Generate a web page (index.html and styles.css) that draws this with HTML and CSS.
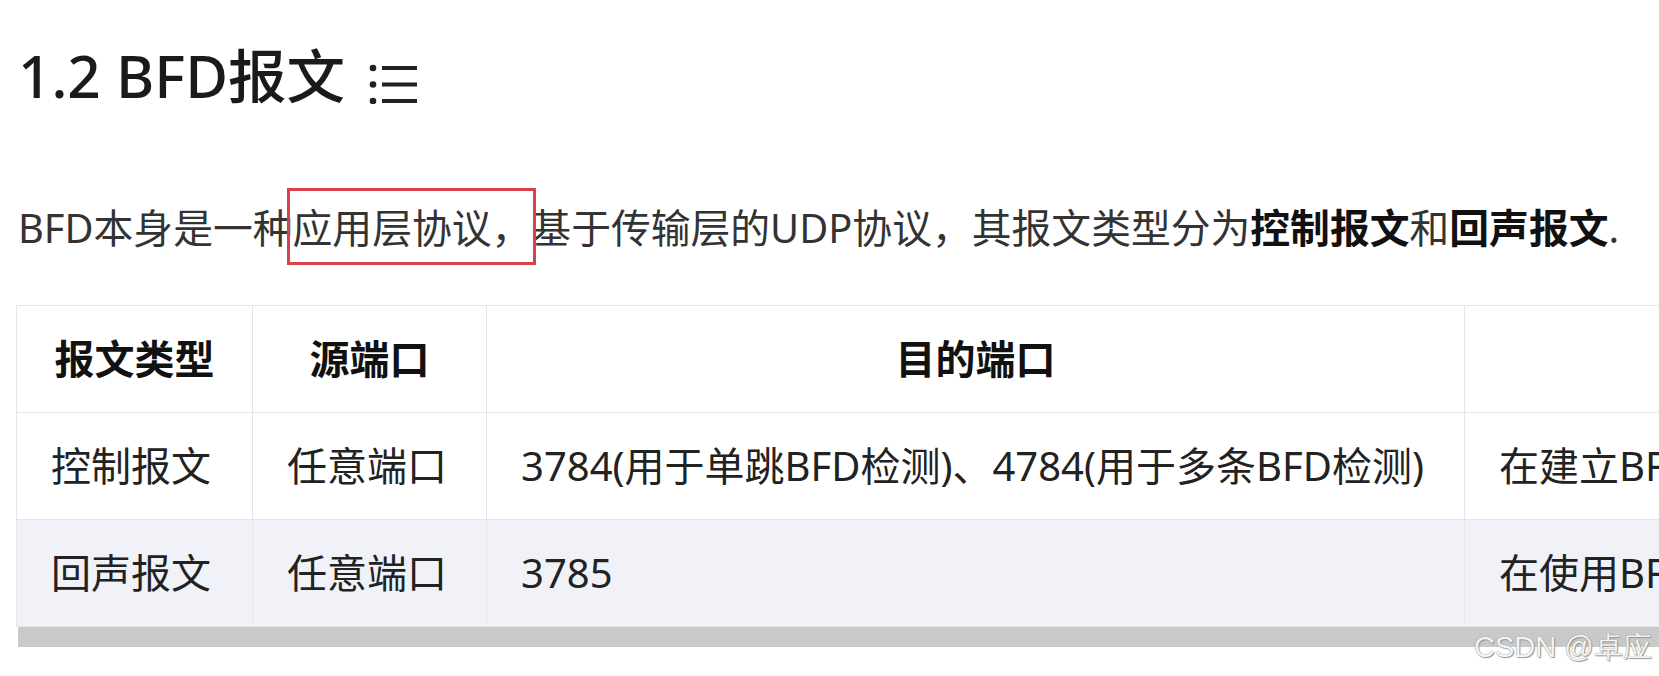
FILE: index.html
```html
<!DOCTYPE html>
<html>
<head>
	<title>1.2 BFD报文</title>

	<link rel="stylesheet" href="styles.css">
</head>
<body>
	<div class="article">
		<h2 class="title">1.2 BFD报文<span class="toc-icon"><svg width="48" height="40" viewBox="0 0 48 40"><circle cx="4" cy="4" r="3.3" fill="#222"/><circle cx="4" cy="20.5" r="3.3" fill="#222"/><circle cx="4" cy="37" r="3.3" fill="#222"/><path d="M13 4H48M13 20.5H48M13 37H48" stroke="#222" stroke-width="4"/></svg></span></h2>

		<p class="text">BFD本身是一种<span class="mark">应用层协议，</span>基于传输层的UDP协议，其报文类型分为<strong>控制报文</strong>和<strong>回声报文</strong>.</p>

		<div class="table-box">
			<table>
				<tr>
					<th class="col-type">报文类型</th>
					<th class="col-src">源端口</th>
					<th class="col-dst">目的端口</th>
					<th class="col-use">说明</th>
				</tr>
				<tr>
					<td>控制报文</td>
					<td>任意端口</td>
					<td>3784(用于单跳BFD检测)、4784(用于多条BFD检测)</td>
					<td>在建立BFD会话时使用</td>
				</tr>
				<tr class="stripe">
					<td>回声报文</td>
					<td>任意端口</td>
					<td>3785</td>
					<td>在使用BFD回声功能时使用</td>
				</tr>
			</table>
		</div>
		<div class="scroll-bar"></div>
	</div>

	<div class="watermark">CSDN @卓应</div>
</body>
</html>
```

FILE: styles.css
```css
html {
	overflow: hidden;
}

body {
	margin: 0;
	padding: 0 0 0 16px;
	font-family: "Noto Sans", "Noto Sans CJK SC", sans-serif;
	color: #222;
	background: #fff;
}

.title {
	margin: 35px 0 0 0;
	font-size: 58.5px;
	font-weight: 500;
	line-height: 80px;
	padding-left: 2px;
	color: #1a1a1a;
}

.toc-icon {
	display: inline-block;
	margin-left: 24px;
	vertical-align: -6px;
}

.toc-icon svg {
	display: block;
}

.text {
	margin: 83px 0 0 0;
	font-size: 39.8px;
	line-height: 60px;
	color: #333;
	padding-left: 2px;
}

.text strong {
	color: #111;
}

.mark {
	position: relative;
}

.mark::after {
	content: "";
	position: absolute;
	left: -6px;
	right: -5px;
	top: -12px;
	bottom: -10px;
	border: 3px solid #d9414a;
}

.table-box {
	margin-top: 47px;
	overflow: hidden;
}

table {
	border-collapse: collapse;
	table-layout: fixed;
	width: 2246px;
	font-size: 40px;
	line-height: 60px;
	color: #222;
}

th, td {
	border: 1px solid #e6e6e6;
	padding: 23px 34px;
	white-space: nowrap;
}

th {
	font-weight: bold;
	text-align: center;
	color: #111;
}

td {
	text-align: left;
}

.col-type {
	width: 167px;
}

.col-src {
	width: 165px;
}

.col-dst {
	width: 909px;
}

.col-use {
	width: 932px;
}

.stripe td {
	background: #f0f2f8;
}

.scroll-bar {
	height: 20px;
	margin-left: 2px;
	background: #c9c9c9;
}

.watermark {
	position: absolute;
	left: 1474px;
	top: 628px;
	font-family: "Liberation Sans", sans-serif;
	font-size: 29px;
	color: #f4f4f4;
	white-space: nowrap;
	text-shadow: 0 0 1px #777, 1px 1px 1px #999;
}
```
